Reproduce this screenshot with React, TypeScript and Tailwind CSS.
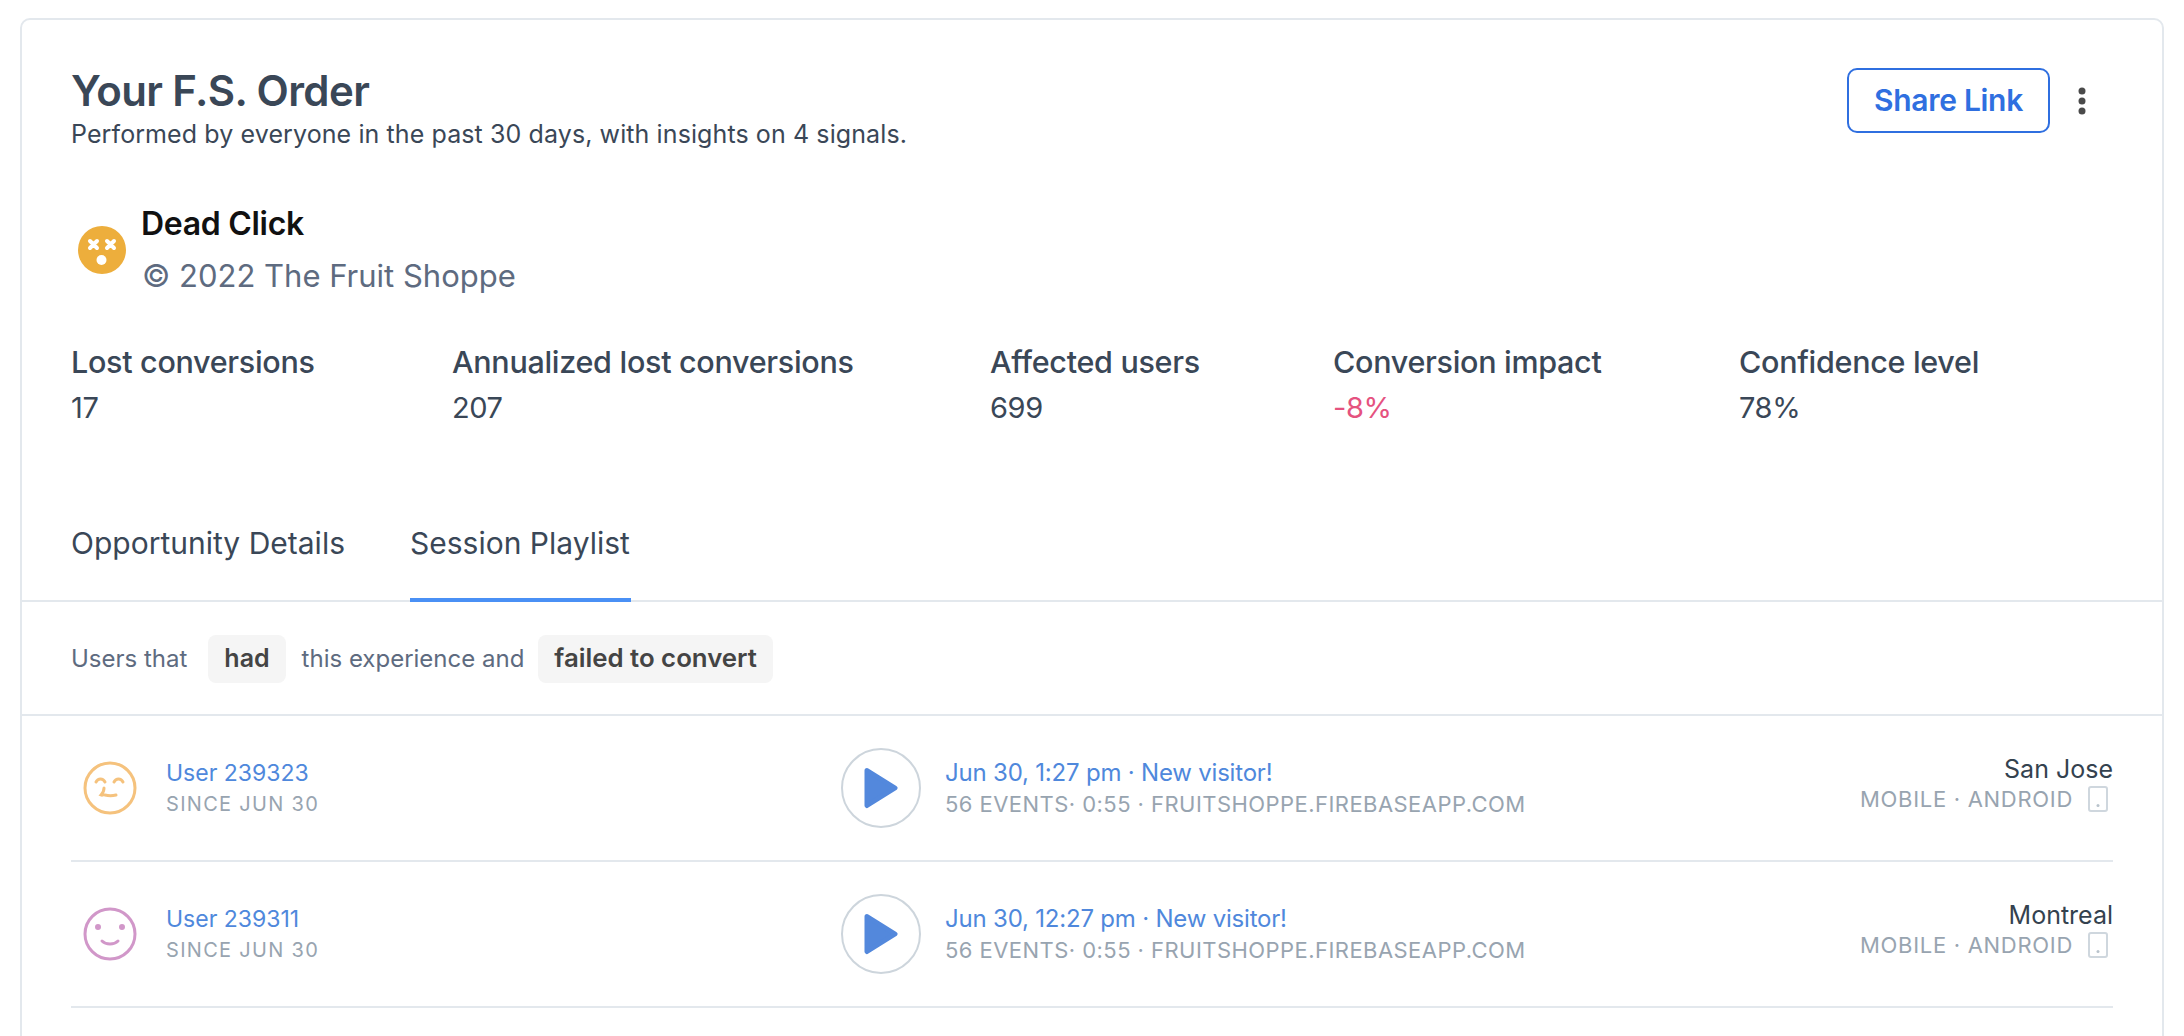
import React from "react";

const font = { fontFamily: "Inter, 'Liberation Sans', sans-serif" };

function Happy() {
  return (
    <svg width="54" height="54" viewBox="0 0 54 54" fill="none" stroke="#f5c27d" strokeWidth="3" strokeLinecap="round">
      <circle cx="27" cy="27" r="25" />
      <path d="M13 21c2-4 7-4 9 0M31 21c2-4 7-4 9 0" />
      <path d="M21 27c0 3-1 5-3 7c2 1 2-1 4 0c4 1 7 1 11 0" />
    </svg>
  );
}
function Smile() {
  return (
    <svg width="54" height="54" viewBox="0 0 54 54" fill="none" stroke="#d197c9" strokeWidth="3" strokeLinecap="round">
      <circle cx="27" cy="27" r="25" />
      <circle cx="15" cy="20" r="1.500" fill="#d197c9" />
      <circle cx="39" cy="20" r="1.500" fill="#d197c9" />
      <path d="M19 34c4 4 12 4 16 0" />
    </svg>
  );
}
function Dead() {
  return (
    <svg width="48" height="48" viewBox="0 0 48 48" className="shrink-0">
      <circle cx="24" cy="24" r="24" fill="#edae3c" />
      <g stroke="#fff" strokeWidth="4" strokeLinecap="round">
        <path d="M12 15l7 7M19 15l-7 7M29 15l7 7M36 15l-7 7" />
      </g>
      <circle cx="23.500" cy="34" r="5" fill="#fff" />
    </svg>
  );
}
function Play() {
  return (
    <div className="w-[80px] h-[80px] rounded-full border-2 border-[#cdd5dc] flex items-center justify-center shrink-0">
      <svg width="34" height="42" viewBox="0 0 34 42">
        <path d="M3 3.500 L31 21 L3 38.500 Z" fill="#5388dc" stroke="#5388dc" strokeWidth="5" strokeLinejoin="round" />
      </svg>
    </div>
  );
}
function Phone() {
  return (
    <svg width="20" height="26" viewBox="0 0 20 26" fill="none" className="shrink-0">
      <rect x="1" y="1" width="18" height="24" rx="2" stroke="#cfd7de" strokeWidth="2" />
      <circle cx="10" cy="19.500" r="1.500" fill="#b9c3cc" />
    </svg>
  );
}

function Stat({ w, label, value, red }: { w: string; label: string; value: string; red?: boolean }) {
  return (
    <div className={w}>
      <div className="text-[30.5px] leading-[36px] font-medium text-[#3a4757] tracking-[-0.3px] whitespace-nowrap">{label}</div>
      <div className={`mt-[10px] text-[29px] leading-[36px] tracking-[-0.4px] ${red ? "text-[#e5527f]" : "text-[#3a4757]"}`}>{value}</div>
    </div>
  );
}

function Row({ icon, user, time, city }: { icon: React.ReactNode; user: string; time: string; city: string }) {
  return (
    <div className="h-[146px] border-b-2 border-[#e3e8ed] flex items-center">
      <div className="w-[95px] pl-[12px] shrink-0">{icon}</div>
      <div className="w-[675px] shrink-0">
        <div className="text-[23px] leading-[30px] mb-[1px] text-[#4f88dc]">{user}</div>
        <div className="text-[20px] leading-[30px] tracking-[1.3px] text-[#98a4b0] whitespace-nowrap">SINCE JUN 30</div>
      </div>
      <Play />
      <div className="ml-[24px] flex-1 whitespace-nowrap">
        <div className="text-[24px] leading-[30px] mb-[1px] text-[#4f88dc] tracking-[-0.2px]">{time}</div>
        <div className="text-[22px] leading-[30px] tracking-[0.45px] text-[#98a4b0]">56 EVENTS· 0:55 · FRUITSHOPPE.FIREBASEAPP.COM</div>
      </div>
      <div className="flex flex-col items-end -translate-y-[4px]">
        <div className="text-[25px] leading-[30px] text-[#34424f]">{city}</div>
        <div className="flex items-center gap-[15px] pr-[5px] h-[30px]">
          <span className="text-[22px] tracking-[0.7px] text-[#98a4b0] whitespace-nowrap">MOBILE · ANDROID</span>
          <Phone />
        </div>
      </div>
    </div>
  );
}

export default function App() {
  return (
    <div className="h-[1036px] overflow-hidden bg-white" style={font}>
      <div className="mt-[18px] ml-[20px] mr-[20px] h-[1100px] border-2 border-[#e3e8ed] rounded-[10px] bg-white inline-block w-[2144px] align-top">
        <div className="px-[49px]">
          <div className="flex justify-between items-start pt-[50px]">
            <div>
              <div className="text-[42px] leading-[42px] font-semibold text-[#3a4757] tracking-[-0.6px]">Your F.S. Order</div>
              <div className="text-[25px] leading-[28px] text-[#3a4757] mt-[8px] tracking-[0.1px]">Performed by everyone in the past 30 days, with insights on 4 signals.</div>
            </div>
            <div className="flex items-center mr-[26px] -mt-[2px]">
              <button className="w-[203px] h-[65px] rounded-[10px] border-2 border-[#2f6fe0] text-[#2f6fe0] text-[30px] font-semibold tracking-[-0.3px] bg-white">Share Link</button>
              <svg width="10" height="30" viewBox="0 0 10 30" className="ml-[27px]">
                <circle cx="5" cy="5" r="3.500" fill="#4a4a4a" />
                <circle cx="5" cy="15" r="3.500" fill="#4a4a4a" />
                <circle cx="5" cy="25" r="3.500" fill="#4a4a4a" />
              </svg>
            </div>
          </div>

          <div className="flex items-center mt-[58px] pl-[7px] gap-[15px]">
            <Dead />
            <div>
              <div className="text-[32px] leading-[36px] font-semibold text-[#111] tracking-[-0.3px]">Dead Click</div>
              <div className="text-[31px] leading-[36px] text-[#5e6b80] mt-[16px] pl-[1px]">© 2022 The Fruit Shoppe</div>
            </div>
          </div>

          <div className="flex mt-[50px]">
            <Stat w="w-[381px]" label="Lost conversions" value="17" />
            <Stat w="w-[538px]" label="Annualized lost conversions" value="207" />
            <Stat w="w-[343px]" label="Affected users" value="699" />
            <Stat w="w-[406px]" label="Conversion impact" value="-8%" red />
            <Stat w="w-[300px]" label="Confidence level" value="78%" />
          </div>
        </div>

        <div className="border-b-2 border-[#e3e8ed] mt-[66px] px-[49px] flex h-[110px] items-stretch text-[30px] text-[#3a4757]">
          <div className="pt-[29px] w-[339px] whitespace-nowrap">Opportunity Details</div>
          <div className="pt-[29px] border-b-4 border-[#4a90f5] -mb-[2px] w-[221px] whitespace-nowrap">Session Playlist</div>
        </div>

        <div className="border-b-2 border-[#e3e8ed] h-[114px] px-[49px] flex items-center text-[24px] text-[#5e6b80] pt-[1px]">
          <span>Users that</span>
          <span className="ml-[21px] h-[48px] px-[16px] rounded-[8px] bg-[#f5f5f5] flex items-center font-semibold text-[#444] text-[25px]">had</span>
          <span className="ml-[16px]">this experience and</span>
          <span className="ml-[14px] h-[48px] px-[16px] rounded-[8px] bg-[#f5f5f5] flex items-center font-semibold text-[#444] text-[25.8px]">failed to convert</span>
        </div>

        <div className="px-[49px]">
          <Row icon={<Happy />} user="User 239323" time="Jun 30, 1:27 pm · New visitor!" city="San Jose" />
          <Row icon={<Smile />} user="User 239311" time="Jun 30, 12:27 pm · New visitor!" city="Montreal" />
        </div>
      </div>
    </div>
  );
}
